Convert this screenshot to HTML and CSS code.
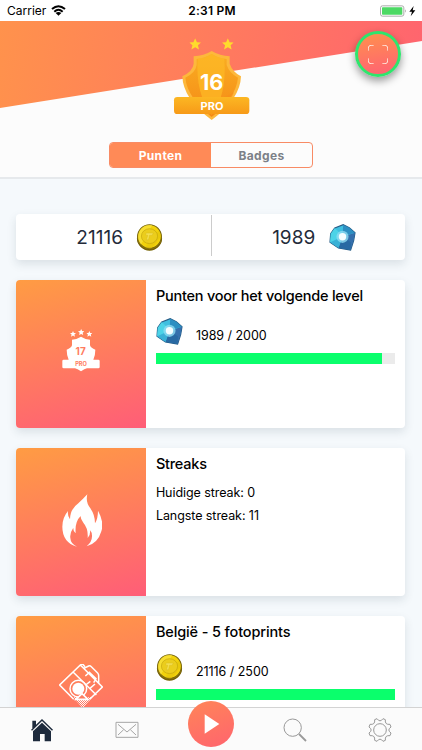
FILE: index.html
```html
<!DOCTYPE html>
<html lang="nl">
<head>
<meta charset="utf-8">
<meta name="viewport" content="width=device-width, initial-scale=1">
<title>Punten</title>
<link rel="stylesheet" href="styles.css">
</head>
<body>
<svg class="defs" width="0" height="0" aria-hidden="true">
  <defs>
    <linearGradient id="gold" x1="0" y1="0" x2="0" y2="1"><stop offset="0" stop-color="#f9ad22"/><stop offset="1" stop-color="#f58a16"/></linearGradient>
    <linearGradient id="ribbon" x1="0" y1="0" x2="0" y2="1"><stop offset="0" stop-color="#fcb723"/><stop offset="1" stop-color="#f79a18"/></linearGradient>
    <pattern id="dots" width="6" height="6" patternUnits="userSpaceOnUse"><path d="M0 0h3v3H0zM3 3h3v3H3z" fill="#fff"/></pattern>
    <symbol id="coin" viewBox="0 0 80 80">
      <circle cx="40" cy="42" r="37" fill="#7b6808"/>
      <path d="M4 42a36 34 0 0 0 72 0" fill="#b38e08" stroke="#574a0b" stroke-width="2"/>
      <circle cx="40" cy="37" r="35" fill="#f2d20b" stroke="#77660f" stroke-width="3"/>
      <path d="M48 4 15 61C3 47 3 27 16 13 25 4 37 1 48 4z" fill="#fae340" opacity=".7"/>
      <path d="M67 20 27 69q9 4 20 2l27-34q0-9-7-17z" fill="#e3c30b" opacity=".6"/>
      <ellipse cx="40" cy="36" rx="24" ry="22" fill="#ebcd1c" stroke="#c4a60e" stroke-width="2"/>
      <path d="M30 27h21l-3 6h-8l-3 14h-6l4-14h-6z" fill="#f5e050" stroke="#d2b41a"/>
    </symbol>
    <symbol id="gem" viewBox="0 0 80 80">
      <path d="M17 12 42 2 60 11 77 26 73 49 64 77 28 71 3 54 5 29z" fill="#3fbfe0" stroke="#265b85" stroke-width="3.500"/>
      <path d="m42 2 18 9 17 15-37 10z" fill="#2d8fc2"/>
      <path d="m77 26-4 23-9 28-24-39z" fill="#356fac"/>
      <path d="m64 77-36-6 12-33 25 16z" fill="#2869a3"/>
      <path d="m3 54 37-16-12 33z" fill="#39b1d6"/>
      <path d="m5 29 12-17 25 24-39 18z" fill="#4cd3e7"/>
      <circle cx="40" cy="38" r="18" fill="#8edcf2" opacity=".8"/><circle cx="40" cy="38" r="11" fill="#f4fdff"/>
    </symbol>
    <symbol id="star" viewBox="-10 -10 20 20"><path d="M0-10 3-3.500 10-3 4.700 2 6.500 9 0 5.400-6.500 9-4.700 2-10-3-3-3.500z"/></symbol>
  </defs>
</svg>
<div class="app">
  <div class="status">
    <div class="carrier"><span>Carrier</span>
      <svg width="15" height="11" viewBox="0 0 45 33"><path d="M3 12Q22-5 42 12M10 20Q22 9 35 20" fill="none" stroke="#000" stroke-width="6"/><path d="m14 24q8-6 17 0l-8.500 8z"/></svg>
    </div>
    <div class="clock">2:31 PM</div>
    <div class="power">
      <svg width="37" height="14" viewBox="0 0 111 42"><rect x="1.500" y="5.500" width="70" height="31" rx="6" fill="#fff" stroke="#9a9a9a" stroke-width="2.500"/><rect x="6" y="10" width="61" height="22" rx="2" fill="#4cd964"/><path d="M75 16q5 5 0 10z" fill="#9a9a9a"/><path d="M101 6 88 23h8l-4 14 14-18h-8z"/></svg>
    </div>
  </div>
  <header class="header">
    <svg class="badge" width="100" height="95" viewBox="3 0 300 285">
      <g fill="#ffdb2c"><use href="#star" x="88" y="25" width="35" height="35"/><use href="#star" x="186" y="25" width="35" height="35"/></g>
      <path d="M155 63q25 15 54 16l0 22q8 24 34 38-2 68-88 131-86-63-88-131 32-16 34-38l0-22q30-1 54-16z" fill="#fdb83c"/>
      <path d="M155 72q22 13 45 15l0 18q8 24 34 38-6 60-79 118-73-58-79-118 30-14 34-38l0-18q23-2 45-15z" fill="url(#gold)"/>
      <path d="M155 72q21 12 38 14 8 110-38 168-49-63-42-168 23-2 42-14z" fill="#fdb825" opacity=".75"/>
      <path d="M180 208 222 187q-14 40-42 50z" fill="#f8901b" opacity=".6"/>
      <rect x="42" y="201" width="226" height="51" rx="10" fill="url(#ribbon)"/>
      <text class="badge-number" x="155" y="179">16</text>
      <text class="badge-label" x="156" y="239">PRO</text>
    </svg>
    <div class="segments"><div class="segment active">Punten</div><div class="segment">Badges</div></div>
    <div class="scan">
      <svg width="20" height="19" viewBox="0 0 60 57"><path d="M1 17V9q0-8 8-8h8M43 1h8q8 0 8 8v8M59 40v8q0 8-8 8h-8M17 56H9q-8 0-8-8v-8" fill="none" stroke="#ffe0d5" stroke-width="3"/></svg>
    </div>
  </header>
  <main class="content">
    <section class="totals">
      <div class="total"><span>21116</span><svg width="27" height="27"><use href="#coin"/></svg></div>
      <div class="total"><span>1989</span><svg width="27" height="27"><use href="#gem"/></svg></div>
    </section>
    <article class="card">
      <div class="tile">
        <svg width="38" height="43" viewBox="0 0 114 129"><g fill="#fff"><use href="#star" x="24" y="6" width="18" height="18"/><use href="#star" x="48" y="0" width="19" height="19"/><use href="#star" x="73" y="6" width="18" height="18"/><path d="M57 23q12 8 27 9v17q3 9 16 13 0 17-6 30h15q4 0 4 4v18q0 4-4 4H75q-7 2-18 9-11-7-18-9H5q-4 0-4-4V96q0-4 4-4h15q-6-13-6-30 13-4 16-13V32q15-1 27-9z"/></g><text class="tile-number" x="56" y="79">17</text><text class="tile-label" x="57" y="111">PRO</text></svg>
      </div>
      <div class="details">
        <h2>Punten voor het volgende level</h2>
        <div class="score"><svg width="27" height="27"><use href="#gem"/></svg><span>1989 / 2000</span></div>
        <div class="bar"><div class="fill" style="width:94.2%"></div></div>
      </div>
    </article>
    <article class="card">
      <div class="tile flame">
        <svg width="40" height="53" viewBox="0 0 120 159"><path d="M76 1q-6 23 9 42 14 20 14 45 9-15 9-38 19 34 10 62-10 36-44 45 17-14 16-32 0-9-5-16 0 14-8 23 2-29-13-46-9-11-8-20-18 17-15 52-8-5-7-17-11 15-9 31 1 18 20 26Q1 145 1 98q0-27 17-47-2 15 6 25 0-30 25-48Q65 13 76 1z" fill="#fff"/></svg>
      </div>
      <div class="details">
        <h2>Streaks</h2>
        <p>Huidige streak: 0</p>
        <p>Langste streak: 11</p>
      </div>
    </article>
    <article class="card">
      <div class="tile">
        <svg width="44" height="45" viewBox="0 0 132 135"><path d="m42 100h58l-29 32z" fill="url(#dots)"/><g fill="none" stroke="#fff" stroke-width="4.500"><path d="M44 106 2 63 64 3l66 66-38 37M63 5l7-6 8 9M73 14l16-8q4-2 8 2l19 19q3 3 3 8v22M43 25l69 68M79 36l12-11 20 19-7 12M94 52 80 63M108 60 92 74"/><circle cx="58" cy="74" r="25"/></g><circle cx="58" cy="74" r="18" fill="#fff"/><path d="m51 106 18-17 18 17z" fill="#fc7d62" stroke="#fff" stroke-width="5"/></svg>
      </div>
      <div class="details">
        <h2 class="wide">België - 5 fotoprints</h2>
        <div class="score"><svg width="27" height="27"><use href="#coin"/></svg><span>21116 / 2500</span></div>
        <div class="bar"><div class="fill" style="width:100%"></div></div>
      </div>
    </article>
  </main>
  <nav class="tabs">
    <div class="tab"><svg width="24" height="24" viewBox="0 0 72 72"><path d="M7 32V8h11v12L36 3l33 32-3 3-30-29L6 38l-3-3z" fill="#1d2a3c"/><path d="m36 14 27 26v30H44V48H30v22H9V40z" fill="#1d2a3c"/></svg></div>
    <div class="tab"><svg width="24" height="18" viewBox="0 0 72 54"><g fill="none" stroke="#a5a5a5" stroke-width="3"><path d="M3 4h66v45H3zM9 10l27 23 27-23M9 42l17-16M63 42 46 26"/></g></svg></div>
    <div class="tab"><div class="play"><svg width="18" height="20" viewBox="0 0 54 60"><path d="M5 1 49 30 5 59z" fill="#fff"/></svg></div></div>
    <div class="tab"><svg width="24" height="24" viewBox="0 0 72 72"><circle cx="29" cy="29" r="26" fill="none" stroke="#999" stroke-width="3"/><path d="m48 48 21 21" stroke="#999" stroke-width="5.500"/></svg></div>
    <div class="tab"><svg width="24" height="24" viewBox="0 0 72 72"><g fill="none" stroke="#999" stroke-width="3" stroke-linejoin="round"><path d="M27 2q9 13 18 0l7 3q-2 16 14 14l3 8q-13 9 0 18l-3 8q-16-2-14 14l-7 3q-9-13-18 0l-7-3q2-16-14-14l-3-8q13-9 0-18l3-8q16 2 14-14z"/><circle cx="36" cy="36" r="19"/></g></svg></div>
  </nav>
</div>
</body>
</html>
```
FILE: styles.css
```css
* { box-sizing: border-box; }
body { margin: 0; font-family: Inter, "Liberation Sans", sans-serif; color: #000; }
svg { display: block; flex: none; }
.defs { position: absolute; }
.app { display: flex; flex-direction: column; height: 750px; overflow: hidden; background: #f5f9fc; }

.status { flex: none; display: grid; grid-template-columns: 1fr auto 1fr; align-items: center; height: 21px; padding: 0 5px 0 7px; background: #fff; font-size: 12px; }
.carrier { display: flex; align-items: center; gap: 5px; }
.clock { font-weight: 600; letter-spacing: .25px; }
.power { display: flex; justify-content: flex-end; }

.header { position: relative; flex: none; display: flex; flex-direction: column; align-items: center; gap: 17px; height: 158px; padding-top: 9px; border-bottom: 2px solid #e6e9ec; background: #fcfcfc; }
.header::before { content: ""; position: absolute; inset: 0 0 auto; height: 87px; background: linear-gradient(100deg, #ff924c, #ff646f); clip-path: polygon(0 0, 100% 0, 100% 20px, 0 100%); }
.badge { position: relative; }
.badge text, .tile text { text-anchor: middle; font-weight: 700; }
.badge text { fill: #fff; }
.badge-number { font-size: 65px; }
.badge-label { font-size: 33px; }
.segments { display: grid; grid-template-columns: 1fr 1fr; width: 204px; height: 26px; border: 1px solid #f88b65; border-radius: 4px; overflow: hidden; font-size: 12px; font-weight: 700; letter-spacing: .35px; }
.segment { display: flex; align-items: center; justify-content: center; color: #7c8188; padding-top: 1px; }
.segment.active { background: #ff8a57; color: #fff; }
.scan { position: absolute; top: 10px; right: 21px; display: grid; place-items: center; width: 46px; height: 46px; border: 3px solid #2fe56d; border-radius: 50%; background: linear-gradient(170deg, #ff914d, #ff6174); box-shadow: 0 4px 8px rgba(0, 0, 0, .4); }

.content { flex: 1; min-height: 0; overflow: hidden; display: flex; flex-direction: column; gap: 20px; padding: 35px 16.600px 0 16.400px; }
.totals, .card { flex: none; border-radius: 4px; background: #fff; box-shadow: 0 4px 10px rgba(40, 60, 80, .13); }
.totals { display: grid; grid-template-columns: 1fr 1fr; height: 46px; }
.total { display: flex; align-items: center; justify-content: center; gap: 13px; height: 41px; margin-top: 1px; padding: 4px 0 0 12px; color: #242b3a; font-size: 19px; }
.total + .total { border-left: 1px solid #ccc; padding-left: 11px; gap: 14px; }
.card { display: grid; grid-template-columns: 129.500px 1fr; height: 148px; }
.tile { display: grid; place-items: center; padding-bottom: 8px; border-radius: 4px 0 0 4px; background: linear-gradient(165deg, #ff9c43, #ff5d78); }
.flame { padding: 0 0 4px 1px; }
.tile text { fill: #ff7c60; }
.tile-number { font-size: 30px; }
.tile-label { font-size: 17px; }
.details { padding: 6px 10px 0; }
.details h2 { margin: 0; font-size: 14.500px; line-height: 20px; font-weight: 500; letter-spacing: -.23px; }
.details h2.wide { letter-spacing: -.13px; }
.details p { margin: 0; font-size: 12.500px; line-height: 23px; letter-spacing: -.07px; }
.details h2 + p { margin-top: 7px; }
.score { display: flex; align-items: center; gap: 13px; height: 27px; margin-top: 12px; font-size: 12.500px; letter-spacing: -.04px; }
.score span { padding-top: 8px; }
.bar { height: 10.500px; margin-top: 8px; background: #ebebeb; }
.fill { height: 100%; background: #0aff6c; }

.tabs { position: relative; flex: none; display: grid; grid-template-columns: repeat(5, 1fr); height: 43px; border-top: 1px solid #d3d3d3; background: #fbfbfb; }
.tab { display: flex; align-items: center; justify-content: center; padding-top: 2px; }
.play { display: grid; place-items: center; flex: none; width: 46px; height: 46px; margin-top: -13px; padding-left: 3px; border-radius: 50%; background: linear-gradient(160deg, #ff8558, #ff646e); }
```
